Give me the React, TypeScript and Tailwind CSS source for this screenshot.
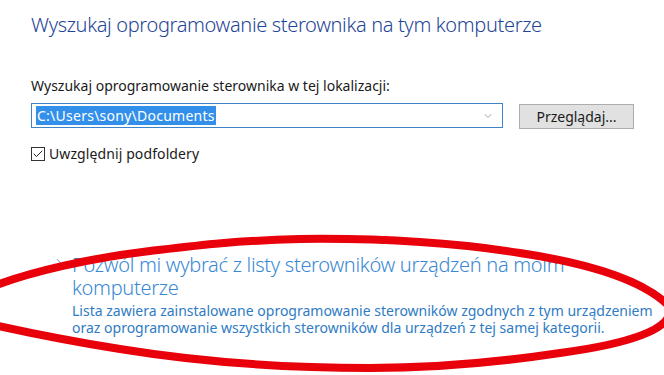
import { Check, ChevronDown, ChevronRight } from 'lucide-react'

const FONT = "font-['Noto_Sans','Open_Sans',sans-serif]"

export default function App() {
  return (
    <div className={`relative w-[664px] h-[375px] overflow-hidden bg-white ${FONT}`}>
      <div className="pl-[31px] pt-[12px]">
        <h1 className="text-[20px] leading-[25px] font-light tracking-[-0.35px] text-[#1f4696]">
          Wyszukaj oprogramowanie sterownika na tym komputerze
        </h1>

        <p className="mt-[40px] text-[14px] leading-[17px] tracking-[0px] text-[#1a1a1a]">
          Wyszukaj oprogramowanie sterownika w tej lokalizacji:
        </p>

        <div className="mt-[8px] flex items-center">
          <div className="flex items-center w-[472px] h-[25px] border border-[#3d84c6] pl-[4px] pr-[8px]">
            <span className="bg-[#3390ea] text-white text-[14px] leading-[19px] tracking-[0.25px] px-[1px]">
              C:\Users\sony\Documents
            </span>
            <ChevronDown className="ml-auto w-[12px] h-[12px] text-[#888]" strokeWidth={1.5} />
          </div>
          <button className="ml-[16px] w-[115px] h-[25px] mt-[2px] bg-[#e1e1e1] border border-[#adadad] text-[14px] text-[#1a1a1a]">
            Przeglądaj...
          </button>
        </div>

        <label className="mt-[17px] flex items-center gap-[4px]">
          <span className="flex items-center justify-center w-[14px] h-[14px] border border-[#333] bg-white">
            <Check className="w-[12px] h-[12px] text-[#222]" strokeWidth={2} />
          </span>
          <span className="text-[14px] leading-[16px] tracking-[0.1px] text-[#1a1a1a]">Uwzględnij podfoldery</span>
        </label>

        <div className="mt-[91px] flex">
          <ChevronRight className="mt-[3px] ml-[21px] w-[14px] h-[14px] text-[#3a84cc]" strokeWidth={1.5} />
          <div className="ml-[6px] w-[590px]">
            <p className="text-[20px] leading-[23px] font-light tracking-[-0.3px] text-[#3a88d4] w-[520px]">
              Pozwól mi wybrać z listy sterowników urządzeń na moim komputerze
            </p>
            <p className="mt-[3px] text-[14px] leading-[17px] tracking-[0px] text-[#2f7bc4]">
              Lista zawiera zainstalowane oprogramowanie sterowników zgodnych z tym urządzeniem oraz oprogramowanie wszystkich sterowników dla urządzeń z tej samej kategorii.
            </p>
          </div>
        </div>
      </div>

      <svg className="absolute left-0 top-0 pointer-events-none" width="664" height="375" viewBox="0 0 664 375">
        <path
          d="M -6 286 C 30 272, 90 258, 150 251 C 200 245, 230 241, 300 239 C 380 238, 450 242, 520 253 C 580 262, 640 278, 668 305 C 680 330, 620 345, 560 353 C 500 362, 440 368, 370 368 C 280 368, 200 362, 120 349 C 70 341, 30 333, -6 325"
          fill="none"
          stroke="#e8000b"
          strokeWidth="8"
          strokeLinecap="round"
        />
      </svg>
    </div>
  )
}
